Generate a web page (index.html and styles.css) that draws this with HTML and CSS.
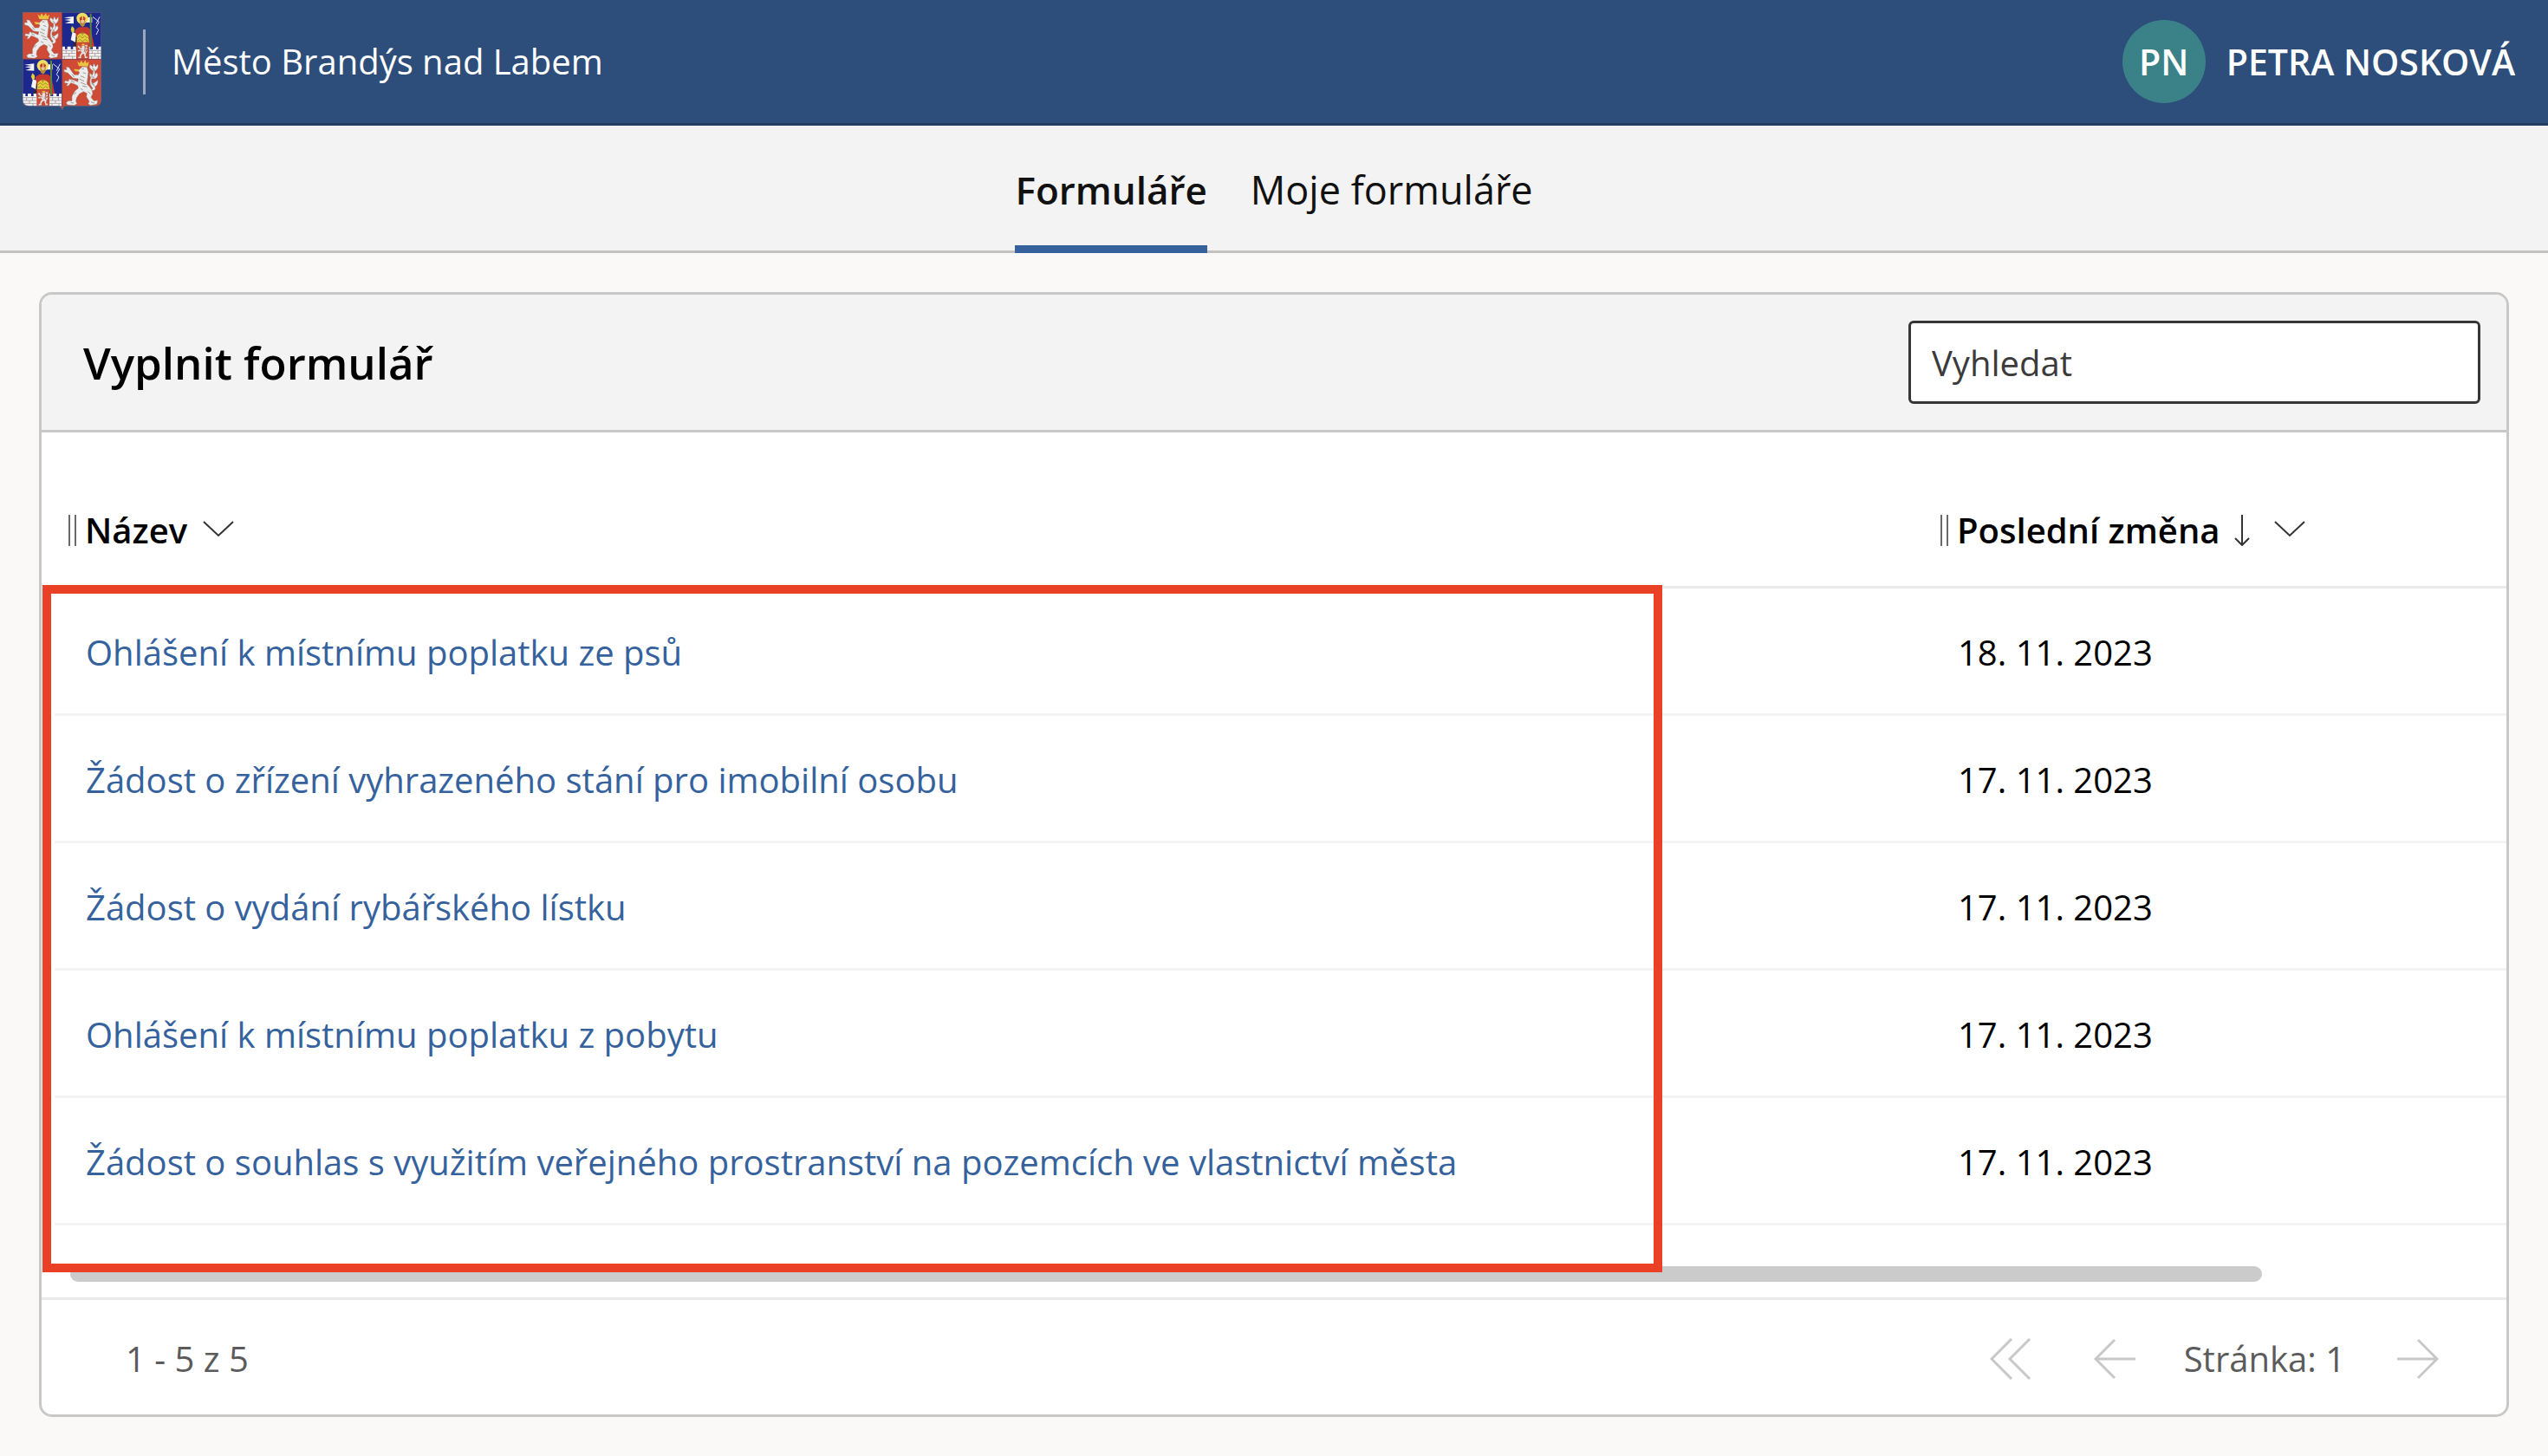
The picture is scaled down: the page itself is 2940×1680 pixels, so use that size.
FILE: index.html
```html
<!DOCTYPE html>
<html lang="cs">
<head>
<meta charset="utf-8">
<title>Formuláře – Město Brandýs nad Labem</title>
<meta name="viewport" content="width=device-width, initial-scale=1">
<link rel="stylesheet" href="styles.css">
</head>
<body>
<header class="topbar">
  <svg class="crest" viewBox="0 0 273 342" role="img" aria-label="Znak města">
    <defs>
      <clipPath id="shield"><path d="M0 0H273V304Q273 325 250 325H146L137 338L128 325H22Q0 325 0 304Z"/></clipPath>
      <g id="lion">
        <rect width="137" height="163" fill="#cf4b35"/>
        <g stroke="#8a7370" stroke-width="1.5" stroke-linejoin="round" fill="#ececec">
          <path d="M112 42Q98 38 94 26L97 18L106 26L110 14L116 26L124 16Q128 34 112 42ZM104 68Q92 60 96 48L108 58L120 46Q130 58 114 68ZM106 96Q92 90 98 76L108 84L124 72Q126 90 112 96Z"/>
          <path d="M92 106C112 116 122 100 110 92C98 80 100 68 110 60C118 54 112 44 111 36L107 38C109 48 104 56 100 62C92 76 98 90 104 98C110 106 98 104 90 98Z"/>
          <path d="M54 40L70 26L86 27L91 44L88 70L86 86Q106 104 106 120L100 132L110 144L124 142L120 156L98 160L90 154L94 146L84 130L86 118L74 112L60 120L50 134L48 146L52 154L42 160L18 158L14 150L22 144L34 144L34 128L44 110L56 100L54 92L42 86L30 82L22 92L14 92L20 84L8 82L10 74L22 76L24 68L40 72L54 78L56 68L38 66L26 54L20 48L8 44L6 36L16 36L14 26L24 28L32 40L42 54L56 54L60 46Z"/>
        </g>
        <path fill="none" stroke="#77716f" stroke-width="2" d="M68 34L76 33M72 46L82 50M64 58L78 64M60 68L76 76M64 80L82 88M70 92L86 96M64 102L72 106M90 112L98 120M42 122L48 114M30 150L40 152M100 148L112 152M34 52L42 62M30 74L42 80M104 60L112 66M102 84L112 90M104 30L112 36"/>
        <path fill="#e9c440" d="M58 24L52 7L61 14L66 4L73 14L81 3L84 14L93 8L89 25ZM40 34L56 35L60 42L46 42Z"/>
      </g>
      <g id="saint">
        <rect width="136" height="163" fill="#1d288f"/>
        <path fill="#f4f4f4" d="M6 19L40 15V40L10 38L30 31L8 27L32 23Z"/><path fill="#f4f4f4" d="M84 18H104V36H84Z"/>
        <path fill="none" stroke="#e4e6f0" stroke-width="3" d="M106 16L128 34L118 52L126 62L118 78M130 16L118 40"/>
        <path fill="#3c2732" d="M48 60L38 122H112L92 60Z"/><path fill="#c4382e" d="M44 62L58 52H88L100 62L112 122H94L88 90H54L46 84Z"/>
        <path fill="#f4f4f4" d="M36 68L48 74L46 104L30 96Z"/><path fill="#e3cf3e" d="M30 60L34 48L42 56L42 68L34 72Z"/>
        <path fill="#e3cf3e" d="M52 82Q70 60 90 82L94 106H50Z"/>
        <circle cx="70" cy="22" r="20" fill="#ede060"/><path fill="#b98a35" d="M61 30H81L78 46L71 52L63 46Z"/><path fill="#c9362b" d="M60 20L71 12L81 20L79 30H62Z"/><path fill="#efc19d" d="M65 27H77V35L71 39L65 35Z"/><path fill="#ede060" d="M69 12H73V26H69Z"/>
        <path fill="none" stroke="#8b711d" stroke-width="2" d="M54 88L62 82L70 90L78 82L88 90M54 100L62 94L70 102L80 94L90 102M70 66V82M64 74H77"/>
        <path fill="none" stroke="#5e8437" stroke-width="6" d="M99 5V126"/>
        <path fill="#f4f4f4" d="M0 163V119H10V128H18V119H30V128H38V119H48V128H86V119H96V128H106V119H118V128H126V119H136V163Z"/>
        <path fill="none" stroke="#8e8083" stroke-width="2" d="M0 133H48M92 133H136M0 143H48M92 143H136M0 153H48M92 153H136M14 133V143M34 133V143M24 143V153M8 153V163M36 153V163M104 133V143M124 133V143M114 143V153M102 153V163M126 153V163"/>
        <rect x="49" y="104" width="44" height="59" fill="#c8402f"/>
        <use href="#lion" transform="translate(51 107) scale(.3 .33)"/>
      </g>
    </defs>
    <g clip-path="url(#shield)">
      <use href="#lion"/><use href="#saint" x="137"/><use href="#saint" y="163"/>
      <use href="#lion" x="137" y="163"/>
      <path fill="#9c5a55" d="M128 325H146L137 338Z"/>
      <path fill="none" stroke="#7d3843" stroke-width="2" d="M137 0V325M0 163H273"/>
    </g>
    <path fill="none" stroke="#69627d" stroke-width="2" d="M1 1H272V304Q272 325 250 325H146L137 338L128 325H22Q1 325 1 304Z"/>
  </svg>
  <span class="divider"></span>
  <span>Město Brandýs nad Labem</span>
  <button class="user" type="button"><span class="avatar">PN</span><span>PETRA NOSKOVÁ</span></button>
</header>

<nav class="tabs">
  <a class="tab tab-active" href="#formulare" aria-current="page">Formuláře</a>
  <a class="tab" href="#moje">Moje formuláře</a>
</nav>

<main class="card">
  <div class="card-head">
    <h1 class="card-title">Vyplnit formulář</h1>
    <input class="search" type="search" placeholder="Vyhledat" aria-label="Vyhledat">
  </div>
  <div class="list">
    <table class="forms">
      <colgroup><col><col class="col-date"></colgroup>
      <thead>
        <tr>
          <th scope="col"><button class="sort" type="button"><span class="grip"></span><span>Název</span>
            <svg class="chevron" viewBox="0 0 36 22" aria-hidden="true"><path d="M1 1L18 17L35 1"/></svg></button></th>
          <th scope="col" aria-sort="descending"><button class="sort" type="button"><span class="grip"></span><span>Poslední změna</span>
            <svg class="arrow-down" viewBox="0 0 18 36" aria-hidden="true"><path d="M9 0V35M1 27L9 35L17 27"/></svg>
            <svg class="chevron" viewBox="0 0 36 22" aria-hidden="true"><path d="M1 1L18 17L35 1"/></svg></button></th>
        </tr>
      </thead>
      <tbody>
        <tr><td><a href="#f1">Ohlášení k místnímu poplatku ze psů</a></td><td>18. 11. 2023</td></tr>
        <tr><td><a href="#f2">Žádost o zřízení vyhrazeného stání pro imobilní osobu</a></td><td>17. 11. 2023</td></tr>
        <tr><td><a href="#f3">Žádost o vydání rybářského lístku</a></td><td>17. 11. 2023</td></tr>
        <tr><td><a href="#f4">Ohlášení k místnímu poplatku z pobytu</a></td><td>17. 11. 2023</td></tr>
        <tr><td><a href="#f5">Žádost o souhlas s využitím veřejného prostranství na pozemcích ve vlastnictví města</a></td><td>17. 11. 2023</td></tr>
      </tbody>
    </table>
    <div class="scroll"><div class="thumb"></div></div>
    <div class="highlight"></div>
  </div>
  <footer class="pager">
    <span class="range">1 - 5 z 5</span>
    <button class="page-btn" type="button" aria-label="První stránka"><svg viewBox="0 0 48 48"><path d="M25 1L2 24L25 47M46 1L23 24L46 47"/></svg></button>
    <button class="page-btn" type="button" aria-label="Předchozí stránka"><svg viewBox="0 0 48 48"><path d="M48 24H2M24 2L2 24L24 46"/></svg></button>
    <span class="page-label">Stránka: 1</span>
    <button class="page-btn" type="button" aria-label="Další stránka"><svg viewBox="0 0 48 48"><path d="M0 24H46M24 2L46 24L24 46"/></svg></button>
  </footer>
</main>
</body>
</html>
```
FILE: styles.css
```css
*, *::before, *::after { box-sizing: border-box; }
body {
  margin: 0;
  background: #faf9f8;
  color: #000;
  font-family: "Open Sans", "Noto Sans", sans-serif;
  font-size: 40px;
  line-height: 56px;
}
button { border: 0; padding: 0; background: none; font: inherit; color: inherit; cursor: pointer; }
a { text-decoration: none; }

.topbar {
  display: flex;
  align-items: center;
  padding: 14px 38px 14px 26px;
  background: #2d4d7b;
  border-bottom: 3px solid #243e60;
  color: #fff;
}
.crest { width: 91px; height: 114px; }
.divider { width: 3px; height: 75px; margin: 0 30px 0 48px; background: #9aa9bf; }
.user { display: flex; align-items: center; gap: 24px; margin-left: auto; font-size: 41px; font-weight: 600; }
.avatar { width: 96px; height: 96px; border-radius: 50%; background: #3b8288; line-height: 96px; text-align: center; }

.tabs {
  display: flex;
  justify-content: center;
  gap: 50px;
  padding-top: 44px;
  background: #f3f3f3;
  border-bottom: 3px solid #c2c2c2;
}
.tab {
  margin-bottom: -3px;
  padding-bottom: 34px;
  border-bottom: 9px solid transparent;
  color: #111;
  font-size: 45px;
  line-height: 60px;
}
.tab-active { border-bottom-color: #35629d; font-size: 44px; font-weight: 600; }

.card {
  margin: 45px;
  background: #fff;
  border: 3px solid #c8c8c8;
  border-radius: 15px;
}
.card-head {
  display: flex;
  align-items: center;
  justify-content: space-between;
  padding: 30px 30px 30px 48px;
  background: #f3f3f3;
  border-bottom: 3px solid #c8c8c8;
  border-radius: 12px 12px 0 0;
}
.card-title { margin: 0; font-size: 51px; font-weight: 600; line-height: 60px; }
.search {
  width: 660px;
  height: 96px;
  padding: 0 24px;
  border: 3px solid #363636;
  border-radius: 6px;
  background: #fff;
  font: inherit;
  appearance: none;
}
.search::placeholder { color: #3b3b3b; opacity: 1; }

.list { position: relative; }
.forms { width: 100%; padding-left: 15px; border-spacing: 0; }
.col-date { width: 669px; }
.forms th { padding: 85px 0 36px 16px; border-bottom: 3px solid #eaeaea; text-align: left; font-weight: 600; }
.forms td { padding: 46px 0 42px 36px; border-bottom: 3px solid #f3f3f3; }
.forms a { color: #35629d; }
.sort { display: flex; align-items: center; }
.grip { width: 9px; height: 36px; margin-right: 10px; border: solid #6a6a6a; border-width: 0 2px; }
.chevron { width: 36px; height: 22px; margin-left: 18px; }
.arrow-down { width: 18px; height: 36px; margin-left: 16px; }
.arrow-down + .chevron { margin-left: 28px; }
.sort svg { fill: none; stroke: #333; stroke-width: 2; }
.scroll { padding: 47px 282px 18px 33px; border-bottom: 3px solid #eaeaea; }
.thumb { height: 18px; border-radius: 9px; background: #cbcbcb; }
.highlight {
  position: absolute;
  top: 176px;
  left: 1px;
  width: 1869px;
  bottom: 32px;
  border: 10px solid #ea4025;
  pointer-events: none;
}

.pager { display: flex; align-items: center; padding: 40px 78px 36px 97px; color: #5b5b5b; }
.range { margin-right: auto; }
.page-btn { display: flex; margin-left: 72px; }
.page-label { margin-left: 56px; }
.page-label + .page-btn { margin-left: 60px; }
.page-btn svg { width: 48px; height: 48px; fill: none; stroke: #c8c8c8; stroke-width: 3; }
```
